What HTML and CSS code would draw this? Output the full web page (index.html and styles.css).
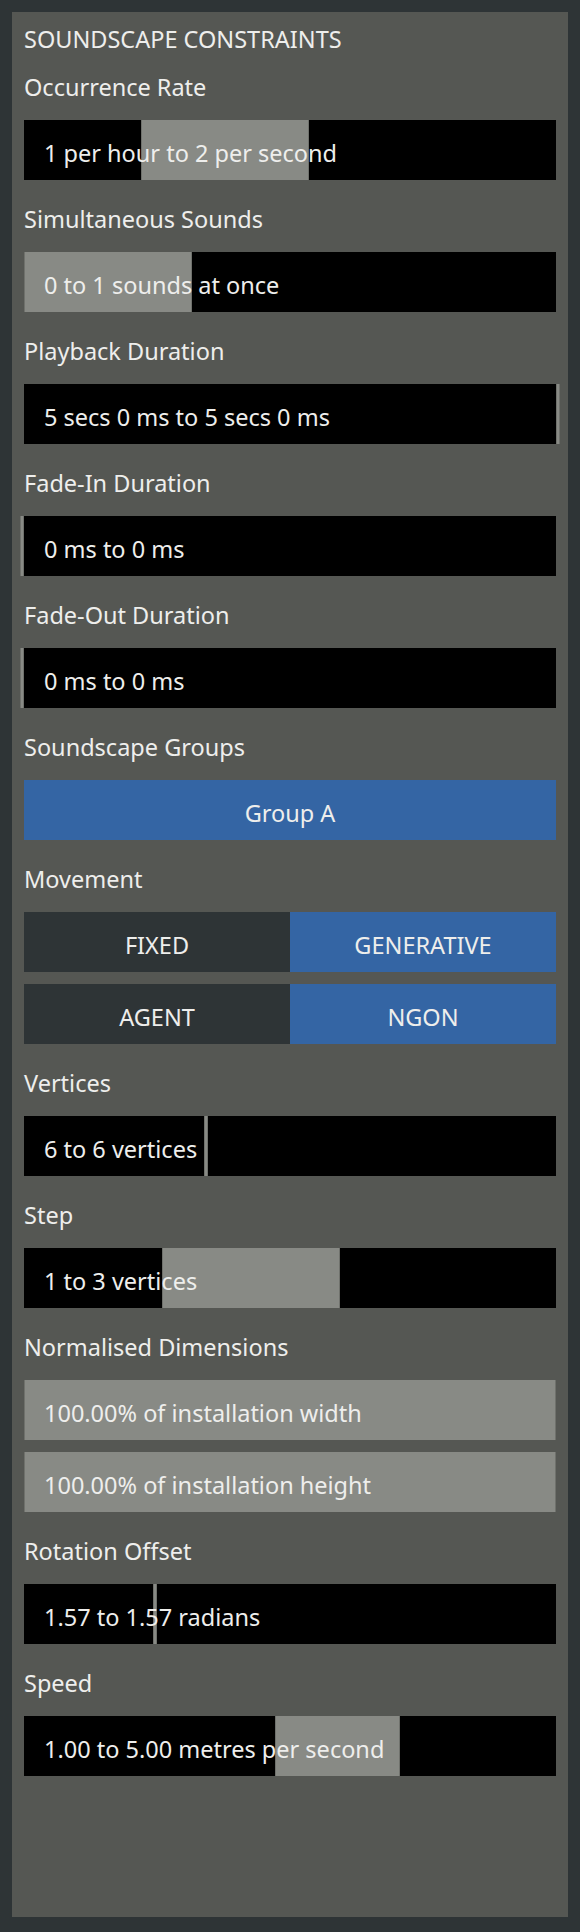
FILE: index.html
```html
<!DOCTYPE html>
<html lang="en">

<head>
    <meta charset="UTF-8">
    <title>Soundscape Constraints</title>
    <link rel="stylesheet" href="styles.css">
</head>

<body>
    <div class="panel">
        <div class="title">SOUNDSCAPE CONSTRAINTS</div>

        <div class="field">
            <div class="label">Occurrence Rate</div>
            <div class="range">
                <div class="fill" style="left: 117px; width: 168px;"></div>
                <span class="value">1 per hour to 2 per second</span>
            </div>
        </div>

        <div class="field">
            <div class="label">Simultaneous Sounds</div>
            <div class="range">
                <div class="fill" style="left: 0; width: 168px;"></div>
                <span class="value">0 to 1 sounds at once</span>
            </div>
        </div>

        <div class="field">
            <div class="label">Playback Duration</div>
            <div class="range">
                <div class="fill" style="left: 532px; width: 4px;"></div>
                <span class="value">5 secs 0 ms to 5 secs 0 ms</span>
            </div>
        </div>

        <div class="field">
            <div class="label">Fade-In Duration</div>
            <div class="range">
                <div class="fill" style="left: -4px; width: 4px;"></div>
                <span class="value">0 ms to 0 ms</span>
            </div>
        </div>

        <div class="field">
            <div class="label">Fade-Out Duration</div>
            <div class="range">
                <div class="fill" style="left: -4px; width: 4px;"></div>
                <span class="value">0 ms to 0 ms</span>
            </div>
        </div>

        <div class="field">
            <div class="label">Soundscape Groups</div>
            <div class="button active">Group A</div>
        </div>

        <div class="field">
            <div class="label">Movement</div>
            <div class="toggle">
                <div class="button">FIXED</div>
                <div class="button active">GENERATIVE</div>
            </div>
            <div class="toggle">
                <div class="button">AGENT</div>
                <div class="button active">NGON</div>
            </div>
        </div>

        <div class="field">
            <div class="label">Vertices</div>
            <div class="range">
                <div class="fill" style="left: 180px; width: 4px;"></div>
                <span class="value">6 to 6 vertices</span>
            </div>
        </div>

        <div class="field">
            <div class="label">Step</div>
            <div class="range">
                <div class="fill" style="left: 138px; width: 178px;"></div>
                <span class="value">1 to 3 vertices</span>
            </div>
        </div>

        <div class="field">
            <div class="label">Normalised Dimensions</div>
            <div class="range">
                <div class="fill" style="left: 0; width: 532px;"></div>
                <span class="value">100.00% of installation width</span>
            </div>
            <div class="range">
                <div class="fill" style="left: 0; width: 532px;"></div>
                <span class="value">100.00% of installation height</span>
            </div>
        </div>

        <div class="field">
            <div class="label">Rotation Offset</div>
            <div class="range">
                <div class="fill" style="left: 129px; width: 4px;"></div>
                <span class="value">1.57 to 1.57 radians</span>
            </div>
        </div>

        <div class="field">
            <div class="label">Speed</div>
            <div class="range">
                <div class="fill" style="left: 251px; width: 125px;"></div>
                <span class="value">1.00 to 5.00 metres per second</span>
            </div>
        </div>
    </div>
</body>

</html>
```

FILE: styles.css
```css
* {
    padding: 0;
    margin: 0;
    box-sizing: border-box;
}

body {
    background-color: #2e3436;
    padding: 12px;
    font-family: "Noto Sans", "Open Sans", sans-serif;
    font-size: 23.5px;
    color: #eeeeec;
}

.panel {
    background-color: #555753;
    height: 1905px;
    padding: 12px;
}

.title {
    line-height: 30px;
    margin-bottom: 18px;
}

.field {
    display: flex;
    flex-direction: column;
    gap: 12px;
}

.field + .field {
    margin-top: 24px;
}

.label {
    line-height: 30px;
    margin-bottom: 6px;
}

.range {
    height: 60px;
    background-color: #000;
    position: relative;
    padding: 7px 20px 0;
    line-height: 53px;
    white-space: nowrap;
}

/* 选中的区间 */
.fill {
    position: absolute;
    top: 0;
    bottom: 0;
    background-color: #888a85;
    border-left: 1px solid #6f716c;
    border-right: 1px solid #6f716c;
}

.value {
    position: relative;
}

.button {
    height: 60px;
    padding-top: 7px;
    line-height: 53px;
    text-align: center;
    background-color: #2e3436;
}

.button.active {
    background-color: #3465a4;
}

.toggle {
    display: grid;
    grid-template-columns: 1fr 1fr;
}
```
